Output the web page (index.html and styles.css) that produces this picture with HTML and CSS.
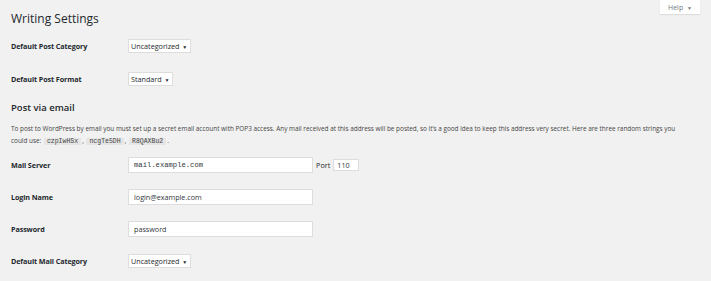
FILE: index.html
```html
<!DOCTYPE html>
<html lang="en">
<head>
    <meta charset="UTF-8">
    <title>Writing Settings</title>
    <link rel="stylesheet" href="styles.css">
</head>
<body>
    <div class="help-bar">
        <button type="button" class="help-btn">Help <span class="arrow">&#9660;</span></button>
    </div>
    <div class="wrap">
        <h1>Writing Settings</h1>
        <table class="form-table">
            <tr>
                <th>Default Post Category</th>
                <td><span class="select">Uncategorized <span class="arrow">&#9660;</span></span></td>
            </tr>
            <tr>
                <th>Default Post Format</th>
                <td><span class="select">Standard <span class="arrow">&#9660;</span></span></td>
            </tr>
        </table>

        <h2>Post via email</h2>
        <p class="note">To post to WordPress by email you must set up a secret email account with POP3 access. Any mail received at this address will be posted, so it&rsquo;s a good idea to keep this address very secret. Here are three random strings you could use: <code>czpIwHSx</code>, <code>ncgTe5DH</code>, <code>R8QAXBu2</code>.</p>

        <table class="form-table mail-table">
            <tr>
                <th>Mail Server</th>
                <td>
                    <input type="text" class="regular-text code" value="mail.example.com">
                    <label class="port-label">Port</label>
                    <input type="text" class="small-text" value="110">
                </td>
            </tr>
            <tr>
                <th>Login Name</th>
                <td><input type="text" class="regular-text" value="login@example.com"></td>
            </tr>
            <tr>
                <th>Password</th>
                <td><input type="text" class="regular-text" value="password"></td>
            </tr>
            <tr>
                <th>Default Mail Category</th>
                <td><span class="select">Uncategorized <span class="arrow">&#9660;</span></span></td>
            </tr>
        </table>
    </div>
</body>
</html>
```

FILE: styles.css
```css
body {
    margin: 0;
    background: #f1f1f1;
    color: #23282d;
    font-family: "Open Sans", sans-serif;
    font-size: 8px;
}
.help-bar {
    position: absolute;
    top: 0;
    right: 11px;
}
.help-btn {
    display: block;
    width: 40px;
    height: 14px;
    padding: 0;
    border: none;
    background: #fff;
    box-shadow: 0 1px 1px rgba(0, 0, 0, 0.08);
    color: #72777c;
    font-family: inherit;
    font-size: 7px;
}
.help-btn .arrow {
    font-size: 5px;
    margin-left: 2px;
}
.wrap {
    padding: 9px 11px;
}
h1 {
    margin: 0;
    font-size: 12px;
    font-weight: 400;
    line-height: 20px;
}
.form-table {
    border-collapse: collapse;
    margin-top: 0;
}
.form-table th {
    width: 117px;
    padding: 0;
    height: 33px;
    text-align: left;
    font-size: 7.2px;
    font-weight: 700;
    letter-spacing: -0.1px;
}
.mail-table {
    margin-top: 1px;
}
.mail-table th {
    height: 32px;
}
.form-table td {
    padding: 0;
}
.select {
    display: inline-block;
    height: 14px;
    line-height: 13px;
    padding: 0 3px 0 2px;
    background: #fff;
    border: 1px solid #ddd;
    box-sizing: border-box;
    font-size: 7.2px;
}
.select .arrow {
    font-size: 5px;
    margin-left: 1px;
}
h2 {
    margin: 6px 0 0;
    font-size: 9.5px;
    font-weight: 600;
}
.note {
    max-width: 668px;
    margin: 9px 0 0;
    font-size: 6.4px;
    line-height: 12px;
    color: #444;
}
code {
    background: #e5e5e5;
    padding: 0 3px;
    margin: 0 1px;
    font-family: "Liberation Mono", monospace;
    font-size: 6.5px;
}
input {
    height: 16px;
    box-sizing: border-box;
    border: 1px solid #ddd;
    background: #fff;
    padding: 0 5px;
    font-family: inherit;
    font-size: 7.2px;
    color: #32373c;
    vertical-align: middle;
}
.regular-text {
    width: 185px;
}
.code {
    font-family: "Liberation Mono", monospace;
}
.port-label {
    font-size: 7.2px;
    vertical-align: middle;
    margin: 0 1px 0 1px;
}
.small-text {
    width: 26px;
    height: 12px;
    padding: 0 3px;
}
```
